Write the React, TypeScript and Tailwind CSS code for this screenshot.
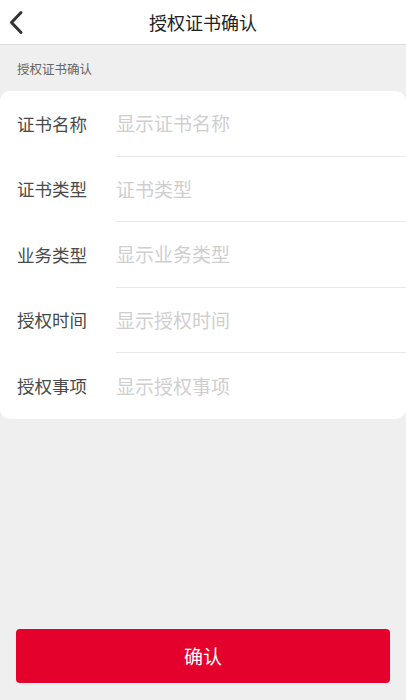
const rows = [
  { label: "证书名称", value: "显示证书名称" },
  { label: "证书类型", value: "证书类型" },
  { label: "业务类型", value: "显示业务类型" },
  { label: "授权时间", value: "显示授权时间" },
  { label: "授权事项", value: "显示授权事项" },
];

export default function App() {
  return (
    <div
      className="w-[406px] h-[700px] bg-[#efefef] flex flex-col"
      style={{ fontFamily: '"Noto Sans CJK SC", "Noto Sans", sans-serif' }}
    >
      {/* header */}
      <div className="h-[45px] bg-white border-b border-[#dcdcdc] relative flex items-center justify-center shrink-0">
        <button className="absolute left-[8px] top-[10px] w-[16px] h-[25px] flex items-center justify-center">
          <svg width="16" height="25" viewBox="0 0 16 25" fill="none">
            <path d="M13 2.5 L3.5 12.5 L13 22.5" stroke="#333" strokeWidth="3" strokeLinecap="round" strokeLinejoin="round" />
          </svg>
        </button>
        <h1 className="text-[18px] text-[#222] leading-none">授权证书确认</h1>
      </div>

      <div className="px-[17px] pt-[15px] pb-[13px] text-[12.5px] text-[#666] leading-[18px]">授权证书确认</div>

      {/* card */}
      <div className="bg-white rounded-[10px]">
        {rows.map((row, i) => (
          <div key={row.label} className="flex items-stretch h-[65.5px]">
            <div className="w-[116px] pl-[17px] flex items-center text-[17.5px] text-[#4a4a4a]">{row.label}</div>
            <div
              className={
                "flex-1 flex items-center text-[19px] text-[#cfcfcf] " +
                (i < rows.length - 1 ? "border-b border-[#e8e8e8]" : "")
              }
            >
              {row.value}
            </div>
          </div>
        ))}
      </div>

      <div className="flex-1" />

      <div className="px-[16px] pb-[17px]">
        <button className="w-full h-[54px] bg-[#e4022d] rounded-[4px] text-white text-[19px] flex items-center justify-center">
          确认
        </button>
      </div>
    </div>
  );
}
